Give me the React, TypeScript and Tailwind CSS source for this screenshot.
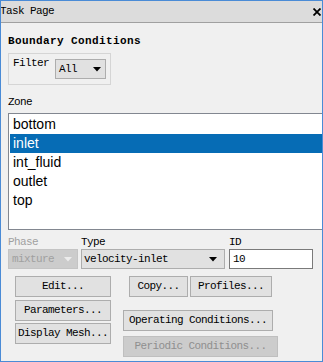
import React from "react";

const mono = "font-['Liberation_Mono',monospace] text-[11px] tracking-[-0.6px]";

function Arrow({ color = "#000" }: { color?: string }) {
  return (
    <svg width="8" height="5" viewBox="0 0 8 5">
      <path d="M0 0 L8 0 L4 4.5 Z" fill={color} />
    </svg>
  );
}

function Btn({
  label,
  w,
  disabled,
  className = "",
}: {
  label: string;
  w: number;
  disabled?: boolean;
  className?: string;
}) {
  return (
    <div
      style={{ width: w }}
      className={`h-[21px] flex items-center justify-center border leading-none ${
        disabled
          ? "bg-[#cccccc] border-[#bfbfbf] text-[#8f8f8f]"
          : "bg-[#e1e1e1] border-[#adadad] text-black"
      } ${className}`}
    >
      {label}
    </div>
  );
}

export default function App() {
  const zones = ["bottom", "inlet", "int_fluid", "outlet", "top"];
  const selected = "inlet";

  return (
    <div
      className={`w-[323px] h-[362px] overflow-hidden border border-[#4a8bd6] bg-[#f0f0f0] flex flex-col ${mono} text-black`}
    >
      {/* title bar */}
      <div className="h-[22px] shrink-0 bg-[#dcdcdc] border-b border-[#a0a0a0] flex items-center justify-between">
        <span className="ml-[-1px] leading-none">Task Page</span>
        <svg width="8" height="8" viewBox="0 0 8 8" className="mr-[1px]">
          <path d="M0.5 0.5 L7.5 7.5 M7.5 0.5 L0.5 7.5" stroke="#000" strokeWidth="1.8" />
        </svg>
      </div>

      <div className="flex flex-col pl-[7px]">
        <div className="mt-[12px] h-[12px] leading-[12px] font-bold tracking-[0.4px]">
          Boundary Conditions
        </div>

        {/* filter group */}
        <div className="mt-[6px] w-[103px] h-[32px] border border-[#d5d5d5] flex items-start pl-[4px]">
          <span className="mt-[3px] leading-[12px]">Filter</span>
          <div className="mt-[5px] ml-[6px] w-[51px] h-[20px] bg-[#e1e1e1] border border-[#adadad] flex items-center justify-between pl-[3px] pr-[4px]">
            <span className="leading-none">All</span>
            <Arrow />
          </div>
        </div>

        <div className="mt-[11px] h-[12px] leading-[12px]">Zone</div>

        {/* zone list */}
        <div className="mt-[5px] w-[330px] h-[117px] bg-white border border-[#828790] p-[1px] font-['Liberation_Sans',sans-serif] text-[14px] tracking-normal">
          {zones.map((z) => (
            <div
              key={z}
              className={`h-[19px] leading-[19px] pl-[3px] ${
                z === selected ? "bg-[#066cb5] text-white" : "text-black"
              }`}
            >
              {z}
            </div>
          ))}
        </div>

        {/* phase / type / id */}
        <div className="mt-[6px] flex h-[12px] leading-[12px]">
          <span className="w-[73px] text-[#a0a0a0]">Phase</span>
          <span className="w-[148px]">Type</span>
          <span>ID</span>
        </div>
        <div className="mt-[1px] flex items-start">
          <div className="w-[70px] h-[20px] bg-[#cccccc] border border-[#c4c4c4] flex items-center justify-between pl-[3px] pr-[5px] text-[#a0a0a0]">
            <span className="leading-none">mixture</span>
            <Arrow color="#ececec" />
          </div>
          <div className="ml-[3px] w-[144px] h-[20px] bg-[#e1e1e1] border border-[#adadad] flex items-center justify-between pl-[2px] pr-[7px]">
            <span className="leading-none">velocity-inlet</span>
            <Arrow />
          </div>
          <div className="ml-[4px] w-[84px] h-[20px] bg-white border border-[#7a7a7a] flex items-center pl-[3px]">
            <span className="leading-none">10</span>
          </div>
        </div>

        {/* buttons */}
        <div className="mt-[7px] flex items-start">
          <div className="ml-[7px] w-[96px] flex flex-col">
            <Btn label="Edit..." w={96} />
            <Btn label="Parameters..." w={96} className="mt-[3px]" />
            <Btn label="Display Mesh..." w={96} className="mt-[2px]" />
          </div>
          <div className="ml-[12px] flex flex-col">
            <div className="flex ml-[6px]">
              <Btn label="Copy..." w={59} />
              <Btn label="Profiles..." w={82} className="ml-[2px]" />
            </div>
            <Btn label="Operating Conditions..." w={150} className="mt-[13px]" />
            <Btn label="Periodic Conditions..." w={155} disabled className="mt-[5px]" />
          </div>
        </div>
      </div>
    </div>
  );
}
